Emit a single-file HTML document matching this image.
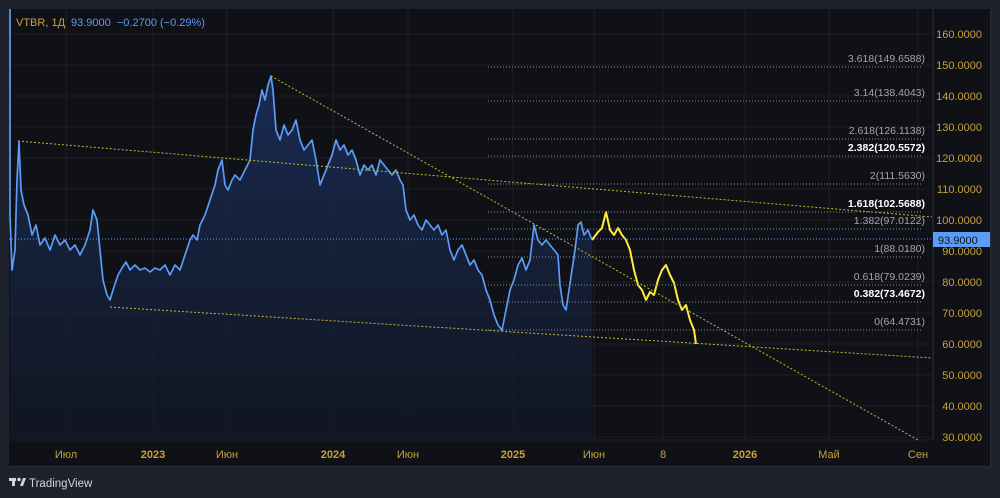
<!DOCTYPE html>
<html><head><meta charset="utf-8"><style>
body{margin:0;width:1000px;height:498px;background:#1e222d;overflow:hidden;font-family:"Liberation Sans",sans-serif}
</style></head><body>
<svg width="1000" height="498" viewBox="0 0 1000 498" style="position:absolute;left:0;top:0" font-family="Liberation Sans, sans-serif">
<defs><linearGradient id="g" x1="0" y1="0" x2="0" y2="1"><stop offset="0" stop-color="#1c3160" stop-opacity="0.85"/><stop offset="1" stop-color="#121828" stop-opacity="0.6"/></linearGradient></defs>
<rect x="9" y="9" width="982" height="458" fill="#0f1116"/>
<rect x="9" y="466" width="982" height="1" fill="#2a2e39"/>
<rect x="990" y="9" width="1" height="458" fill="#2a2e39"/>
<g stroke="#1c1f27" stroke-width="1">
<line x1="66" y1="9" x2="66" y2="440"/><line x1="153" y1="9" x2="153" y2="440"/><line x1="227" y1="9" x2="227" y2="440"/><line x1="333" y1="9" x2="333" y2="440"/><line x1="408" y1="9" x2="408" y2="440"/><line x1="513" y1="9" x2="513" y2="440"/><line x1="594" y1="9" x2="594" y2="440"/><line x1="663" y1="9" x2="663" y2="440"/><line x1="745" y1="9" x2="745" y2="440"/><line x1="829" y1="9" x2="829" y2="440"/><line x1="918" y1="9" x2="918" y2="440"/>
<line x1="9" y1="34" x2="933" y2="34"/><line x1="9" y1="65" x2="933" y2="65"/><line x1="9" y1="96" x2="933" y2="96"/><line x1="9" y1="127" x2="933" y2="127"/><line x1="9" y1="158" x2="933" y2="158"/><line x1="9" y1="189" x2="933" y2="189"/><line x1="9" y1="220" x2="933" y2="220"/><line x1="9" y1="251" x2="933" y2="251"/><line x1="9" y1="282" x2="933" y2="282"/><line x1="9" y1="313" x2="933" y2="313"/><line x1="9" y1="344" x2="933" y2="344"/><line x1="9" y1="375" x2="933" y2="375"/><line x1="9" y1="406" x2="933" y2="406"/><line x1="9" y1="437" x2="933" y2="437"/>
</g>
<line x1="933" y1="9" x2="933" y2="440" stroke="#2a2e39"/>
<line x1="9" y1="440" x2="933" y2="440" stroke="#1c1f27"/>
<polygon fill="url(#g)" points="10,440 10,215 12,270 15,250 17,180 19,142 21,190 24,205 28,215 32,235 36,225 40,245 45,238 50,250 55,235 60,245 65,240 70,250 75,245 80,255 85,245 90,230 93,210 97,220 100,250 103,280 107,295 110,300 113,290 118,275 122,268 126,262 130,270 135,265 140,270 145,268 150,272 155,268 160,270 165,265 170,275 175,265 180,270 185,255 190,240 193,235 197,240 200,225 205,215 210,200 215,185 218,170 222,160 225,185 228,190 232,180 235,175 240,180 245,170 250,160 253,130 256,115 259,105 262,90 265,100 268,85 271,76 273,90 276,130 280,140 284,125 288,135 292,130 296,120 300,140 304,150 308,145 312,140 316,160 320,185 324,175 328,165 332,155 336,140 340,150 344,145 348,155 352,150 356,160 360,175 364,165 368,170 372,165 376,175 380,160 384,165 388,170 392,175 396,170 400,180 403,185 406,210 410,220 414,215 418,225 422,230 426,220 430,225 434,230 438,225 442,235 446,230 450,250 454,260 458,250 462,245 466,255 470,265 474,260 478,270 482,275 486,290 490,300 494,315 498,325 502,330 506,310 510,290 514,280 518,265 522,258 526,270 530,260 534,225 538,240 542,245 546,240 550,245 554,250 558,255 560,285 563,305 566,310 569,290 572,270 575,250 578,225 581,222 584,235 588,230 592,240 592,440"/>
<polyline fill="none" stroke="#5b9cf6" stroke-width="1.7" stroke-linejoin="round" points="10,9 10,215 12,270 15,250 17,180 19,142 21,190 24,205 28,215 32,235 36,225 40,245 45,238 50,250 55,235 60,245 65,240 70,250 75,245 80,255 85,245 90,230 93,210 97,220 100,250 103,280 107,295 110,300 113,290 118,275 122,268 126,262 130,270 135,265 140,270 145,268 150,272 155,268 160,270 165,265 170,275 175,265 180,270 185,255 190,240 193,235 197,240 200,225 205,215 210,200 215,185 218,170 222,160 225,185 228,190 232,180 235,175 240,180 245,170 250,160 253,130 256,115 259,105 262,90 265,100 268,85 271,76 273,90 276,130 280,140 284,125 288,135 292,130 296,120 300,140 304,150 308,145 312,140 316,160 320,185 324,175 328,165 332,155 336,140 340,150 344,145 348,155 352,150 356,160 360,175 364,165 368,170 372,165 376,175 380,160 384,165 388,170 392,175 396,170 400,180 403,185 406,210 410,220 414,215 418,225 422,230 426,220 430,225 434,230 438,225 442,235 446,230 450,250 454,260 458,250 462,245 466,255 470,265 474,260 478,270 482,275 486,290 490,300 494,315 498,325 502,330 506,310 510,290 514,280 518,265 522,258 526,270 530,260 534,225 538,240 542,245 546,240 550,245 554,250 558,255 560,285 563,305 566,310 569,290 572,270 575,250 578,225 581,222 584,235 588,230 592,240"/>
<polyline fill="none" stroke="#ffeb3b" stroke-width="2" stroke-linejoin="round" points="592,240 598,232 602,228 606,212 610,230 614,235 618,228 622,235 626,240 630,250 634,270 638,285 642,290 646,300 650,292 654,295 658,280 662,270 666,265 670,275 674,283 678,300 682,310 686,305 690,320 694,330 696,344"/>
<g stroke="#c9b72a" stroke-width="1" stroke-dasharray="2,2">
<line x1="18" y1="141" x2="932" y2="217"/><line x1="271" y1="76" x2="918" y2="440"/><line x1="110" y1="307" x2="932" y2="358"/>
</g>
<g stroke="#8a8d95" stroke-width="1" stroke-dasharray="1,2">
<line x1="488" y1="67" x2="923" y2="67"/><line x1="488" y1="101" x2="923" y2="101"/><line x1="488" y1="139" x2="923" y2="139"/><line x1="488" y1="156" x2="923" y2="156"/><line x1="488" y1="184" x2="923" y2="184"/><line x1="488" y1="212" x2="923" y2="212"/><line x1="488" y1="229" x2="923" y2="229"/><line x1="488" y1="257" x2="923" y2="257"/><line x1="488" y1="285" x2="923" y2="285"/><line x1="488" y1="302" x2="923" y2="302"/><line x1="488" y1="330" x2="923" y2="330"/>
</g>
<line x1="9" y1="239" x2="933" y2="239" stroke="#5b9cf6" stroke-dasharray="1,2"/>
<g font-size="10.5" text-anchor="end" fill="#a3a6ad">
<text x="925" y="62">3.618(149.6588)</text><text x="925" y="96">3.14(138.4043)</text><text x="925" y="134">2.618(126.1138)</text>
<text x="925" y="151" fill="#fff" font-weight="bold">2.382(120.5572)</text><text x="925" y="179">2(111.5630)</text>
<text x="925" y="207" fill="#fff" font-weight="bold">1.618(102.5688)</text><text x="925" y="224">1.382(97.0122)</text>
<text x="925" y="252">1(88.0180)</text><text x="925" y="280">0.618(79.0239)</text>
<text x="925" y="297" fill="#fff" font-weight="bold">0.382(73.4672)</text><text x="925" y="325">0(64.4731)</text>
</g>
<g font-size="11" fill="#c8a13a" text-anchor="end">
<text x="982" y="38">160.0000</text><text x="982" y="69">150.0000</text><text x="982" y="100">140.0000</text><text x="982" y="131">130.0000</text><text x="982" y="162">120.0000</text><text x="982" y="193">110.0000</text><text x="982" y="224">100.0000</text><text x="982" y="255">90.0000</text><text x="982" y="286">80.0000</text><text x="982" y="317">70.0000</text><text x="982" y="348">60.0000</text><text x="982" y="379">50.0000</text><text x="982" y="410">40.0000</text><text x="982" y="441">30.0000</text>
</g>
<rect x="933" y="232" width="57" height="15" fill="#5b9cf6"/>
<text x="938" y="244" font-size="11" fill="#0f1116">93.9000</text>
<g font-size="11" fill="#c8a13a" text-anchor="middle">
<text x="66" y="458">Июл</text><text x="153" y="458" font-weight="bold">2023</text><text x="227" y="458">Июн</text><text x="333" y="458" font-weight="bold">2024</text><text x="408" y="458">Июн</text><text x="513" y="458" font-weight="bold">2025</text><text x="594" y="458">Июн</text><text x="663" y="458">8</text><text x="745" y="458" font-weight="bold">2026</text><text x="829" y="458">Май</text><text x="918" y="458">Сен</text>
</g>
<text x="16" y="26" font-size="11" fill="#c8a13a">VTBR, 1Д</text>
<text x="71" y="26" font-size="11" fill="#5b9cf6" xml:space="preserve">93.9000  −0.2700 (−0.29%)</text>
<g fill="#d1d4dc"><rect x="9" y="478" width="7" height="3"/><rect x="12" y="478" width="3" height="8"/><circle cx="19" cy="479.5" r="1.8"/><polygon points="20,486 23,478 26,478 23,486"/></g>
<text x="29" y="487" font-size="11.5" fill="#d1d4dc">TradingView</text>
</svg>
</body></html>
